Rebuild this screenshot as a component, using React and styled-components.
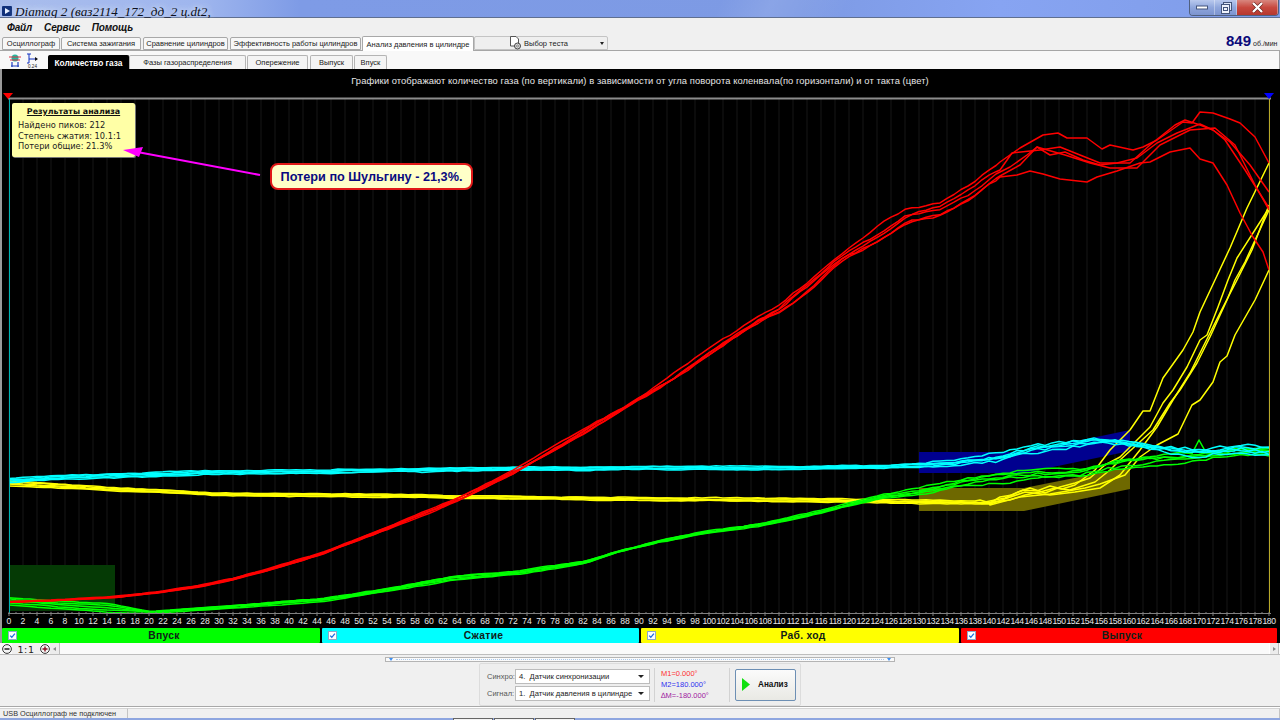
import styled, { createGlobalStyle } from "styled-components";

const GlobalStyle = createGlobalStyle`
  html, body {
    margin: 0;
    padding: 0;
    width: 1280px;
    height: 720px;
    overflow: hidden;
    background: #f0f0f0;
    font-family: "Liberation Sans", Arial, sans-serif;
  }
  * { box-sizing: border-box; }
`;

const Win = styled.div`
  width: 1280px;
  height: 720px;
  display: flex;
  flex-direction: column;
  overflow: hidden;
`;

/* ---------- title bar ---------- */
const TitleBar = styled.div`
  height: 18px;
  flex: none;
  display: flex;
  align-items: flex-start;
  background:
    linear-gradient(115deg, transparent 56%, rgba(255,255,255,.1) 60%, transparent 66%),
    linear-gradient(90deg, #a9bdec 0, #9fb6ee 200px, #7e9be6 300px, #7d9ae4 800px, #87a4f2 1000px, #7f9ce8 1280px);
  border-bottom: 1px solid #5f6f90;
`;
const AppIcon = styled.svg`
  width: 10px;
  height: 10px;
  margin: 6px 3px 0 2px;
  flex: none;
`;
const TitleText = styled.div`
  font-family: "Liberation Serif", serif;
  font-style: italic;
  font-size: 13.2px;
  line-height: 18px;
  margin-top: 3px;
  height: 15px;
  color: #0c1020;
  text-shadow: 0 0 6px #dbe6fb, 0 0 6px #dbe6fb;
  white-space: nowrap;
  flex: 1;
`;
const CaptionGroup = styled.div`
  display: flex;
  height: 16px;
  margin-right: 1px;
  border: 1px solid #50607f;
  border-top: none;
  border-radius: 0 0 4px 4px;
  overflow: hidden;
`;
const CaptionBtn = styled.div`
  width: ${(p) => p.$w}px;
  display: flex;
  align-items: center;
  justify-content: center;
  background: ${(p) =>
    p.$close
      ? "linear-gradient(#d8877f, #c8493f 50%, #b5382f)"
      : "linear-gradient(#b9c9ee, #8fa6dc 50%, #7c94cf)"};
  border-right: 1px solid rgba(255,255,255,.35);
`;

/* ---------- menu ---------- */
const MenuBar = styled.div`
  height: 18px;
  flex: none;
  display: flex;
  align-items: center;
  gap: 12px;
  padding: 0 0 0 7px;
  background: #f0f0f0;
`;
const MenuItem = styled.span`
  font-size: 10px;
  font-weight: bold;
  font-style: italic;
  letter-spacing: -.15px;
  color: #111;
`;

/* ---------- tabs ---------- */
const TabRow = styled.div`
  height: 15px;
  flex: none;
  display: flex;
  align-items: flex-end;
  padding-left: 2px;
  background: #f0f0f0;
  border-bottom: 1px solid #a6a6a6;
`;
const Tab = styled.div`
  width: ${(p) => p.$w}px;
  height: ${(p) => (p.$active ? 15 : 13)}px;
  margin-right: ${(p) => p.$gap ?? 1}px;
  margin-bottom: ${(p) => (p.$active ? -1 : 0)}px;
  display: flex;
  align-items: center;
  justify-content: center;
  font-size: 7.5px;
  color: #222;
  white-space: nowrap;
  background: ${(p) => (p.$active ? "#fff" : "#f7f7f7")};
  border: 1px solid #a8a8a8;
  border-bottom: ${(p) => (p.$active ? "none" : "1px solid #a8a8a8")};
  border-radius: 2px 2px 0 0;
`;
const TestSelect = styled.div`
  width: 134px;
  height: 14px;
  display: flex;
  align-items: center;
  padding-left: 33px;
  gap: 2px;
  font-size: 7.5px;
  color: #222;
  background: #efefef;
  border: 1px solid #c4c4c4;
  border-radius: 2px 2px 0 0;
`;
const SelectArrow = styled.span`
  margin-left: auto;
  margin-right: ${(p) => (p.$big ? 5 : 3)}px;
  width: 0;
  height: 0;
  border: ${(p) => (p.$big ? 3 : 2)}px solid transparent;
  border-top: ${(p) => (p.$big ? 3 : 3)}px solid #222;
  border-bottom: none;
`;
const RpmBox = styled.div`
  margin-left: auto;
  align-self: center;
  width: 54px;
  flex: none;
  display: flex;
  align-items: baseline;
  gap: 2px;
  overflow: hidden;
  white-space: nowrap;
  margin-top: -5px;
`;
const RpmValue = styled.span`
  font-size: 15px;
  font-weight: bold;
  color: #0a0a7a;
`;
const RpmUnit = styled.span`
  font-size: 7px;
  color: #222;
`;

const SubRow = styled.div`
  height: 18px;
  flex: none;
  display: flex;
  align-items: flex-end;
  padding-left: 8px;
  background: #f8f8f8;
  border-right: 1px solid #a6a6a6;
`;
const ToolIcon = styled.svg`
  width: ${(p) => p.$w}px;
  height: 15px;
  margin-right: ${(p) => p.$gap}px;
  margin-bottom: 1px;
  flex: none;
`;
const SubTab = styled.div`
  width: ${(p) => p.$w}px;
  height: 14px;
  margin-right: ${(p) => p.$gap ?? 1}px;
  display: flex;
  align-items: center;
  justify-content: center;
  font-size: ${(p) => (p.$active ? 8.4 : 7.5)}px;
  white-space: nowrap;
  font-weight: ${(p) => (p.$active ? "bold" : "normal")};
  color: ${(p) => (p.$active ? "#fff" : "#222")};
  background: ${(p) => (p.$active ? "#000" : "#f4f4f4")};
  border: 1px solid ${(p) => (p.$active ? "#000" : "#b4b4b4")};
  border-bottom: none;
  border-radius: 2px 2px 0 0;
`;

/* ---------- chart ---------- */
const ChartPanel = styled.div`
  height: 574px;
  flex: none;
  display: flex;
  flex-direction: column;
  background: #000;
  box-shadow: inset 2px 0 0 #9a9a9a;
`;
const ChartTitle = styled.div`
  height: 29px;
  flex: none;
  padding: 6px 0 0 0;
  text-align: center;
  font-size: 9.4px;
  line-height: 12px;
  letter-spacing: .08px;
  color: #e6e6e6;
`;
const Plot = styled.div`
  position: relative;
  height: 517px;
  flex: none;
`;
const PlotSvg = styled.svg`
  display: block;
  overflow: visible;
`;
const ResultBox = styled.div`
  position: absolute;
  left: 12px;
  top: 5px;
  width: 123px;
  height: 54px;
  padding: 3px 6px;
  background: #ffffa6;
  border-radius: 2px;
  box-shadow: 1px 1px 0 #777;
  font-family: "DejaVu Sans", sans-serif;
  font-size: 8.25px;
  line-height: 10.5px;
  color: #222;
`;
const ResultTitle = styled.div`
  font-weight: bold;
  text-align: center;
  text-decoration: underline;
  margin-bottom: 3px;
  font-size: 7.9px;
  color: #111;
  line-height: 11px;
`;
const Callout = styled.div`
  position: absolute;
  left: 270px;
  top: 65px;
  width: 203px;
  height: 27px;
  display: flex;
  align-items: center;
  justify-content: center;
  background: #ffffc8;
  border: 2px solid #e01818;
  border-radius: 8px;
  font-size: 12.7px;
  font-weight: bold;
  color: #0a0a80;
  white-space: nowrap;
`;
const ArrowSvg = styled.svg`
  position: absolute;
  left: 0;
  top: 0;
  pointer-events: none;
`;
const AxisRow = styled.div`
  height: 13px;
  flex: none;
  display: flex;
  padding-left: 2px;
`;
const AxisLabel = styled.div`
  width: 14px;
  flex: none;
  display: flex;
  justify-content: center;
  font-size: 8.6px;
  line-height: 13px;
  letter-spacing: ${(p) => (p.$wide ? "-.4px" : "0")};
  color: #e8e8e8;
  white-space: nowrap;
`;
const PhaseRow = styled.div`
  height: 15px;
  flex: none;
  display: flex;
  gap: 2px;
  padding-left: 2px;
`;
const PhaseBar = styled.div`
  width: ${(p) => p.$w}px;
  display: grid;
  grid-template-columns: 20px 1fr 20px;
  align-items: center;
  padding-left: 6px;
  background: ${(p) => p.$color};
  border-radius: 1px;
  font-size: 10.3px;
  font-weight: bold;
  letter-spacing: .3px;
  text-align: center;
  color: #102018;
`;
const CheckBox = styled.svg`
  width: 9px;
  height: 9px;
  display: block;
`;

/* ---------- lower part ---------- */
const ScrollRow = styled.div`
  height: 12px;
  flex: none;
  display: flex;
  align-items: stretch;
  padding-left: 2px;
  background: #fafafa;
  border-bottom: 1px solid #bdbdbd;
`;
const ZoomBtn = styled.svg`
  width: 10px;
  height: 10px;
  margin-top: 1px;
  flex: none;
`;
const ZoomText = styled.div`
  width: 28px;
  flex: none;
  text-align: center;
  font-size: 9.5px;
  font-family: "DejaVu Sans", sans-serif;
  line-height: 13px;
  letter-spacing: .6px;
  color: #222;
  background: #f0f0f0;
`;
const ScrollBtn = styled.div`
  width: 10px;
  flex: none;
  display: flex;
  align-items: center;
  justify-content: center;
  background: #ececec;
  border-right: 1px solid #bdbdbd;
  border-left: ${(p) => (p.$right ? "1px solid #fff" : "none")};
  margin-left: ${(p) => (p.$right ? "auto" : "0")};
  margin-right: ${(p) => (p.$right ? "1px" : "0")};
`;
const Chevron = styled.span`
  width: 0;
  height: 0;
  border: 2px solid transparent;
  border-left: ${(p) => (p.$right ? "3px solid #888" : "none")};
  border-right: ${(p) => (p.$right ? "none" : "3px solid #888")};
`;
const BottomArea = styled.div`
  flex: 1;
  display: flex;
  flex-direction: column;
  align-items: center;
  padding-top: 2px;
  background: #f0f0f0;
  border-bottom: 1px solid #a8a8a8;
`;
const Slider = styled.div`
  width: 510px;
  height: 5px;
  flex: none;
  display: flex;
  align-items: center;
  justify-content: space-between;
  padding: 0 3px;
  background: #fafafa;
  border: 1px solid #b4b4b4;
`;
const SliderMark = styled.span`
  width: 0;
  height: 0;
  border: 2px solid transparent;
  border-top: 3px solid #3f8ff0;
  border-bottom: none;
`;
const SliderDots = styled.span`
  flex: 1;
  margin: 0 3px;
  border-top: 1px dotted #a9c8ee;
`;
const AnalysisPanel = styled.div`
  width: 322px;
  height: 43px;
  margin-top: 1px;
  flex: none;
  display: flex;
  align-items: center;
  padding-left: 7px;
  background: #eeeeee;
  border: 1px solid #dcdcdc;
  border-radius: 2px;
`;
const SelectGrid = styled.div`
  display: grid;
  grid-template-columns: 28px 135px;
  row-gap: 2px;
  align-items: center;
`;
const FieldLabel = styled.div`
  font-size: 7.5px;
  color: #555;
`;
const Combo = styled.div`
  height: 15px;
  display: flex;
  align-items: center;
  padding-left: 3px;
  font-size: 7.6px;
  color: #222;
  white-space: pre;
  background: #fff;
  border: 1px solid #bcbcbc;
`;
const Divider = styled.div`
  width: 1px;
  height: 34px;
  margin: 0 ${(p) => p.$r}px 0 ${(p) => p.$l}px;
  background: #d2d2d2;
  flex: none;
`;
const Markers = styled.div`
  width: 68px;
  flex: none;
  font-size: 7.5px;
  line-height: 11px;
`;
const Marker = styled.div`
  color: ${(p) => p.$color};
  white-space: nowrap;
`;
const RunButton = styled.div`
  width: 61px;
  height: 32px;
  flex: none;
  display: flex;
  align-items: center;
  padding-left: 6px;
  gap: 8px;
  font-size: 8.2px;
  font-weight: bold;
  color: #111;
  background: linear-gradient(#fbfbfb, #e9e9e4);
  border: 1px solid #6d8fb4;
  border-radius: 2px;
`;
const StatusBar = styled.div`
  height: 11px;
  flex: none;
  display: flex;
  background: #f0f0f0;
  border-top: 1px solid #fff;
`;
const StatusCell = styled.div`
  width: ${(p) => p.$w}px;
  flex: ${(p) => (p.$w ? "none" : 1)};
  padding-left: 3px;
  font-size: 7.3px;
  line-height: 10px;
  color: #333;
  white-space: nowrap;
  border-right: 1px solid #c4c4c4;
  border-top: 1px solid #d4d4d4;
`;
const TaskStrip = styled.div`
  height: 2px;
  flex: none;
  display: flex;
  padding-left: 453px;
  gap: 1px;
  background: #8ea6e0;
`;
const TaskTab = styled.div`
  width: 40px;
  background: #f4f4f4;
  border: 1px solid #666;
  border-bottom: none;
`;

/* ---------- trace data, coordinates are page pixels ---------- */
const hash = (i, k) => {
  const s = Math.sin(i * 127.1 + k * 311.7) * 43758.5453;
  return s - Math.floor(s) - 0.5;
};
const smooth = (i, x) => {
  const cell = 42;
  const k = Math.floor(x / cell);
  const t = x / cell - k;
  return hash(i + 50, k) * (1 - t) + hash(i + 50, k + 1) * t;
};
const interp = (pts, x) => {
  if (x <= pts[0][0]) return pts[0][1];
  for (let n = 1; n < pts.length; n++) {
    if (x <= pts[n][0]) {
      const [x0, y0] = pts[n - 1];
      const [x1, y1] = pts[n];
      return y0 + ((y1 - y0) * (x - x0)) / (x1 - x0);
    }
  }
  return pts[pts.length - 1][1];
};
const buildTraces = ({ seed, base, off, env, wob, low, tails }) =>
  off.map((o, i) => {
    const tail = tails ? tails[i] : [];
    const end = tail.length ? tail[0][0] : 1270;
    const pts = [];
    for (let x = 9; x < end; x += 7) {
      const y =
        interp(base, x) +
        o * interp(env, x) +
        hash(i + seed, x) * interp(wob, x) +
        smooth(i + seed, x) * interp(low, x);
      pts.push([x, y]);
    }
    return pts.concat(tail);
  });
const toStr = (pts) => pts.map(([x, y]) => `${x},${y.toFixed(1)}`).join(" ");

const redTraces = buildTraces({
  seed: 1,
  base: [[9, 602], [60, 600], [115, 597], [160, 592], [200, 586], [233, 579], [267, 570], [320, 554], [387, 528], [437, 508], [470, 493], [517, 470], [570, 440], [620, 411], [670, 380], [723, 343], [757, 320], [780, 308], [807, 287], [840, 258], [873, 237], [907, 215], [940, 208], [973, 190], [1000, 170]],
  off: [-8, 7, 2, -2, 6],
  env: [[9, 0.05], [300, 0.12], [500, 0.2], [650, 0.3], [850, 0.7], [1000, 1]],
  wob: [[9, 0.4], [500, 0.6], [700, 1.4], [1000, 2]],
  low: [[9, 0], [350, 1], [500, 3], [700, 5], [900, 6], [985, 3], [1000, 0]],
  tails: [
    [[1000, 162], [1020, 148], [1043, 135], [1058, 133], [1067, 138], [1087, 138], [1102, 149], [1110, 145], [1133, 150], [1143, 147], [1157, 140], [1183, 122], [1192, 123], [1200, 112], [1213, 113], [1230, 119], [1240, 123], [1255, 137], [1269, 163]],
    [[1000, 177], [1017, 175], [1030, 171], [1043, 174], [1060, 179], [1087, 182], [1097, 177], [1117, 171], [1140, 163], [1150, 162], [1170, 152], [1190, 148], [1200, 159], [1213, 163], [1227, 185], [1240, 213], [1253, 237], [1263, 252], [1269, 270]],
    [[1000, 172], [1010, 167], [1027, 155], [1037, 147], [1050, 155], [1065, 152], [1083, 160], [1100, 165], [1117, 163], [1137, 158], [1157, 143], [1177, 133], [1200, 124], [1213, 130], [1230, 142], [1250, 165], [1269, 192]],
    [[1000, 170], [1012, 153], [1040, 150], [1060, 147], [1080, 155], [1100, 163], [1130, 163], [1150, 145], [1175, 125], [1185, 120], [1200, 125], [1213, 130], [1225, 140], [1245, 170], [1269, 208]],
    [[1000, 176], [1020, 165], [1037, 147], [1065, 155], [1090, 163], [1110, 168], [1137, 168], [1160, 145], [1190, 130], [1215, 128], [1235, 145], [1255, 185], [1269, 210]],
  ],
});

const yellowTraces = buildTraces({
  seed: 11,
  base: [[9, 483], [60, 486], [110, 489], [160, 491], [213, 494], [320, 495], [640, 499], [800, 500], [919, 502], [1000, 503]],
  off: [-1.4, -0.7, 0, 0.7, 1.4],
  env: [[9, 1.8], [100, 1.2], [320, 0.9], [920, 1], [1000, 1]],
  wob: [[9, 0.5], [900, 0.8], [1000, 1.4]],
  low: [[9, 1], [1000, 1.5]],
  tails: [
    [[980, 500], [990, 503], [1000, 497], [1012, 495], [1023, 490], [1037, 491], [1050, 486], [1062, 489], [1075, 485], [1095, 470], [1110, 450], [1130, 430], [1143, 411], [1150, 411], [1163, 378], [1183, 350], [1193, 332], [1200, 312], [1215, 280], [1230, 248], [1247, 208], [1269, 163]],
    [[980, 503], [1005, 498], [1018, 492], [1030, 488], [1045, 493], [1060, 487], [1075, 483], [1090, 478], [1105, 465], [1120, 457], [1150, 427], [1163, 403], [1173, 390], [1187, 367], [1200, 340], [1207, 335], [1218, 307], [1228, 280], [1237, 258], [1269, 208]],
    [[985, 503], [1010, 500], [1025, 495], [1040, 492], [1055, 488], [1070, 490], [1095, 482], [1110, 470], [1120, 460], [1153, 430], [1170, 403], [1180, 390], [1197, 363], [1210, 337], [1227, 300], [1235, 280], [1245, 262], [1269, 210]],
    [[990, 504], [1025, 492], [1050, 495], [1075, 492], [1100, 488], [1120, 475], [1140, 450], [1157, 427], [1173, 400], [1190, 373], [1203, 347], [1220, 313], [1237, 280], [1252, 250], [1269, 205]],
    [[990, 505], [1020, 497], [1050, 494], [1085, 488], [1100, 484], [1125, 475], [1140, 457], [1157, 445], [1178, 434], [1192, 405], [1200, 400], [1213, 382], [1220, 362], [1227, 356], [1235, 335], [1255, 300], [1269, 270]],
  ],
});

const greenTraces = buildTraces({
  seed: 21,
  base: [[9, 601], [60, 605], [110, 608], [150, 612], [213, 608], [320, 600], [387, 590], [453, 578], [520, 572], [553, 567], [587, 562], [613, 553], [660, 541], [700, 533], [760, 525], [820, 512], [880, 497], [915, 492], [960, 483], [1000, 478], [1040, 473], [1080, 472], [1110, 465], [1150, 460], [1200, 457], [1240, 452], [1269, 452]],
  off: [-3.5, -1.8, 0, 1.8, 3.5],
  env: [[9, 1], [110, 1.3], [150, 0.2], [320, 0.4], [500, 0.5], [640, 0.25], [880, 0.5], [1000, 1.2], [1269, 1.2]],
  wob: [[9, 0.4], [880, 0.7], [960, 2], [1269, 2.2]],
  low: [[9, 1], [880, 1.5], [1000, 4], [1269, 4]],
});
greenTraces[0] = greenTraces[0].map(([x, y]) => (x === 1199 ? [x, 440] : [x, y]));

const cyanTraces = buildTraces({
  seed: 31,
  base: [[9, 481], [50, 478], [110, 476], [213, 472], [320, 472], [400, 470], [520, 469], [640, 468], [800, 468], [880, 467], [950, 463], [1000, 458], [1030, 449], [1065, 445], [1100, 441], [1120, 443], [1150, 448], [1175, 452], [1200, 453], [1240, 449], [1269, 452]],
  off: [-2.6, -1.3, 0, 1.3, 2.6],
  env: [[9, 1], [320, 0.6], [900, 0.6], [1000, 1.5], [1150, 0.6], [1200, 1], [1269, 1]],
  wob: [[9, 1.2], [900, 0.7], [950, 2], [1030, 3], [1269, 3.4]],
  low: [[9, 1.5], [900, 1], [1030, 4], [1269, 4]],
});

const SERIES = [
  { color: "#ffff00", traces: yellowTraces },
  { color: "#00ff00", traces: greenTraces },
  { color: "#00ffff", traces: cyanTraces },
  { color: "#ff0000", traces: redTraces },
];

const DEGREES = Array.from({ length: 91 }, (_, i) => i * 2);
const MINOR = Array.from({ length: 181 }, (_, i) => i);
const gridX = (deg) => 9 + deg * 7;

const PHASES = [
  { name: "Впуск", w: 318, color: "#00ff00" },
  { name: "Сжатие", w: 317, color: "#00ffff" },
  { name: "Раб. ход", w: 318, color: "#ffff00" },
  { name: "Выпуск", w: 316, color: "#ff0000" },
];

function Check() {
  return (
    <CheckBox viewBox="0 0 9 9">
      <rect x="0.5" y="0.5" width="8" height="8" fill="#fff" stroke="#8fa8c8" />
      <path d="M2.2 4.6 L3.8 6.3 L6.9 2.6" fill="none" stroke="#1f6fe0" strokeWidth="1.3" />
    </CheckBox>
  );
}

function Chart() {
  return (
    <PlotSvg width="1280" height="517" viewBox="0 98 1280 517">
      {DEGREES.map((d) => (
        <line key={d} x1={gridX(d)} x2={gridX(d)} y1="99" y2="613" stroke="#171717" />
      ))}
      <rect x="9" y="565" width="106" height="46" fill="#053a05" />
      <polygon points="919,452 1024,452 1130,430 1130,451 1024,473 919,473" fill="#00008f" />
      <polygon points="919,488 1024,488 1130,467 1130,489 1024,511 919,511" fill="#6e6800" />
      {SERIES.map((s) =>
        s.traces.map((t, i) => (
          <polyline key={s.color + i} points={toStr(t)} fill="none" stroke={s.color} strokeWidth="1.5" strokeLinejoin="round" />
        ))
      )}
      <line x1="8" x2="1271" y1="98.5" y2="98.5" stroke="#8c8c8c" strokeWidth="2" />
      <line x1="9.5" x2="9.5" y1="99" y2="613" stroke="#00b4b4" />
      <line x1="1269.5" x2="1269.5" y1="99" y2="613" stroke="#b8a828" />
      <line x1="8" x2="1271" y1="613.5" y2="613.5" stroke="#808080" />
      {MINOR.map((d) => (
        <line key={d} x1={gridX(d)} x2={gridX(d)} y1="612" y2={d % 2 ? 614 : 616} stroke="#808080" />
      ))}
      <polygon points="3,93 13,93 8,99" fill="#ff0000" />
      <polygon points="1264,93 1274,93 1269,99" fill="#0000ff" />
    </PlotSvg>
  );
}

export default function App() {
  return (
    <Win>
      <GlobalStyle />
      <TitleBar>
        <AppIcon viewBox="0 0 10 10">
          <rect width="10" height="10" rx="1" fill="#10307a" />
          <path d="M3 2 L8 5 L3 8 Z" fill="#e8f0ff" />
        </AppIcon>
        <TitleText>Diamag 2 (ваз2114_172_дд_2 ц.dt2,</TitleText>
        <CaptionGroup>
          <CaptionBtn $w={25}>
            <svg width="12" height="5" viewBox="0 0 12 5">
              <rect x="0.5" y="1" width="11" height="3" fill="#fff" stroke="#44557c" />
            </svg>
          </CaptionBtn>
          <CaptionBtn $w={22}>
            <svg width="12" height="12" viewBox="0 0 12 12">
              <rect x="3.5" y="0.5" width="8" height="8" fill="#dfe7f8" stroke="#44557c" />
              <rect x="1.5" y="2.5" width="8" height="9" fill="#eef2fc" stroke="#44557c" />
              <rect x="3.5" y="5.5" width="4" height="3" fill="none" stroke="#44557c" />
            </svg>
          </CaptionBtn>
          <CaptionBtn $w={41} $close>
            <svg width="13" height="11" viewBox="0 0 13 11">
              <path d="M2 1 L11 10 M11 1 L2 10" stroke="#5c1a15" strokeWidth="3.4" />
              <path d="M2 1 L11 10 M11 1 L2 10" stroke="#fff" strokeWidth="2.4" />
            </svg>
          </CaptionBtn>
        </CaptionGroup>
      </TitleBar>

      <MenuBar>
        <MenuItem>Файл</MenuItem>
        <MenuItem>Сервис</MenuItem>
        <MenuItem>Помощь</MenuItem>
      </MenuBar>

      <TabRow>
        <Tab $w={58}>Осциллограф</Tab>
        <Tab $w={80} $gap={2}>Система зажигания</Tab>
        <Tab $w={85} $gap={2}>Сравнение цилиндров</Tab>
        <Tab $w={131}>Эффективность работы цилиндров</Tab>
        <Tab $w={112} $active $gap={0}>Анализ давления в цилиндре</Tab>
        <TestSelect>
          <svg width="14" height="14" viewBox="0 0 14 14">
            <path d="M2.5 0.5 H8 L10.5 3 V10 H2.5 Z" fill="#fff" stroke="#555" />
            <circle cx="9.5" cy="10" r="3" fill="#ddd" stroke="#444" />
            <circle cx="9.5" cy="10" r="1" fill="#fff" stroke="#444" strokeWidth=".6" />
          </svg>
          Выбор теста
          <SelectArrow />
        </TestSelect>
        <RpmBox>
          <RpmValue>849</RpmValue>
          <RpmUnit>об./мин</RpmUnit>
        </RpmBox>
      </TabRow>

      <SubRow>
        <ToolIcon $w={14} $gap={4} viewBox="0 0 14 15">
          <circle cx="7" cy="5" r="3.5" fill="#25b8a0" />
          <path d="M1 4 H13 M2 7 H12" stroke="#e03040" strokeWidth="1.2" />
          <path d="M3 13 H11 M4 9 V14 M10 9 V14" stroke="#2040c0" strokeWidth="1.2" fill="none" />
        </ToolIcon>
        <ToolIcon $w={14} $gap={8} viewBox="0 0 14 15">
          <path d="M1 1 H5 M3 1 V10 H1 M3 6 H11" stroke="#1030c0" fill="none" />
          <path d="M9 4 L12 6 L9 8 Z" fill="#111" />
          <text x="2" y="14.5" fontSize="4.6" fill="#222">0.24</text>
        </ToolIcon>
        <SubTab $w={81} $active $gap={0}>Количество газа</SubTab>
        <SubTab $w={117}>Фазы газораспределения</SubTab>
        <SubTab $w={61} $gap={2}>Опережение</SubTab>
        <SubTab $w={43}>Выпуск</SubTab>
        <SubTab $w={33}>Впуск</SubTab>
      </SubRow>

      <ChartPanel>
        <ChartTitle>
          Графики отображают количество газа (по вертикали) в зависимости от угла поворота коленвала(по горизонтали) и от такта (цвет)
        </ChartTitle>
        <Plot>
          <Chart />
          <ResultBox>
            <ResultTitle>Результаты анализа</ResultTitle>
            <div>Найдено пиков: 212</div>
            <div>Степень сжатия: 10.1:1</div>
            <div>Потери общие: 21.3%</div>
          </ResultBox>
          <ArrowSvg width="300" height="100" viewBox="0 98 300 100">
            <line x1="140" y1="152.5" x2="260" y2="175" stroke="#ff00ff" strokeWidth="2" />
            <polygon points="123,150 143,147 139,157" fill="#ff00ff" />
          </ArrowSvg>
          <Callout>Потери по Шульгину - 21,3%.</Callout>
        </Plot>
        <AxisRow>
          {DEGREES.map((d) => (
            <AxisLabel key={d} $wide={d >= 100}>{d}</AxisLabel>
          ))}
        </AxisRow>
        <PhaseRow>
          {PHASES.map((p) => (
            <PhaseBar key={p.name} $w={p.w} $color={p.color}>
              <Check />
              <span>{p.name}</span>
            </PhaseBar>
          ))}
        </PhaseRow>
      </ChartPanel>

      <ScrollRow>
        <ZoomBtn viewBox="0 0 10 10">
          <circle cx="5" cy="5" r="4.4" fill="#f4f4f4" stroke="#333" />
          <path d="M2.5 5 H7.5" stroke="#111" strokeWidth="1.4" />
        </ZoomBtn>
        <ZoomText>1:1</ZoomText>
        <ZoomBtn viewBox="0 0 10 10">
          <circle cx="5" cy="5" r="4.4" fill="#f4f4f4" stroke="#333" />
          <path d="M2.5 5 H7.5 M5 2.5 V7.5" stroke="#8a1020" strokeWidth="1.4" />
        </ZoomBtn>
        <ScrollBtn><Chevron /></ScrollBtn>
        <ScrollBtn $right><Chevron $right /></ScrollBtn>
      </ScrollRow>

      <BottomArea>
        <Slider>
          <SliderMark />
          <SliderDots />
          <SliderMark />
        </Slider>
        <AnalysisPanel>
          <SelectGrid>
            <FieldLabel>Синхро:</FieldLabel>
            <Combo>
              4.  Датчик синхронизации
              <SelectArrow $big />
            </Combo>
            <FieldLabel>Сигнал:</FieldLabel>
            <Combo>
              1.  Датчик давления в цилиндре
              <SelectArrow $big />
            </Combo>
          </SelectGrid>
          <Divider $l={4} $r={6} />
          <Markers>
            <Marker $color="#ff3030">M1=0.000°</Marker>
            <Marker $color="#3030f0">M2=180.000°</Marker>
            <Marker $color="#a020a0">∆M=-180.000°</Marker>
          </Markers>
          <Divider $l={0} $r={5} />
          <RunButton>
            <svg width="8" height="13" viewBox="0 0 8 13">
              <path d="M0 0 L8 6.5 L0 13 Z" fill="#10e010" />
            </svg>
            Анализ
          </RunButton>
        </AnalysisPanel>
      </BottomArea>

      <StatusBar>
        <StatusCell $w={128}>USB Осциллограф не подключен</StatusCell>
        <StatusCell />
      </StatusBar>
      <TaskStrip>
        <TaskTab />
        <TaskTab />
        <TaskTab />
      </TaskStrip>
    </Win>
  );
}
